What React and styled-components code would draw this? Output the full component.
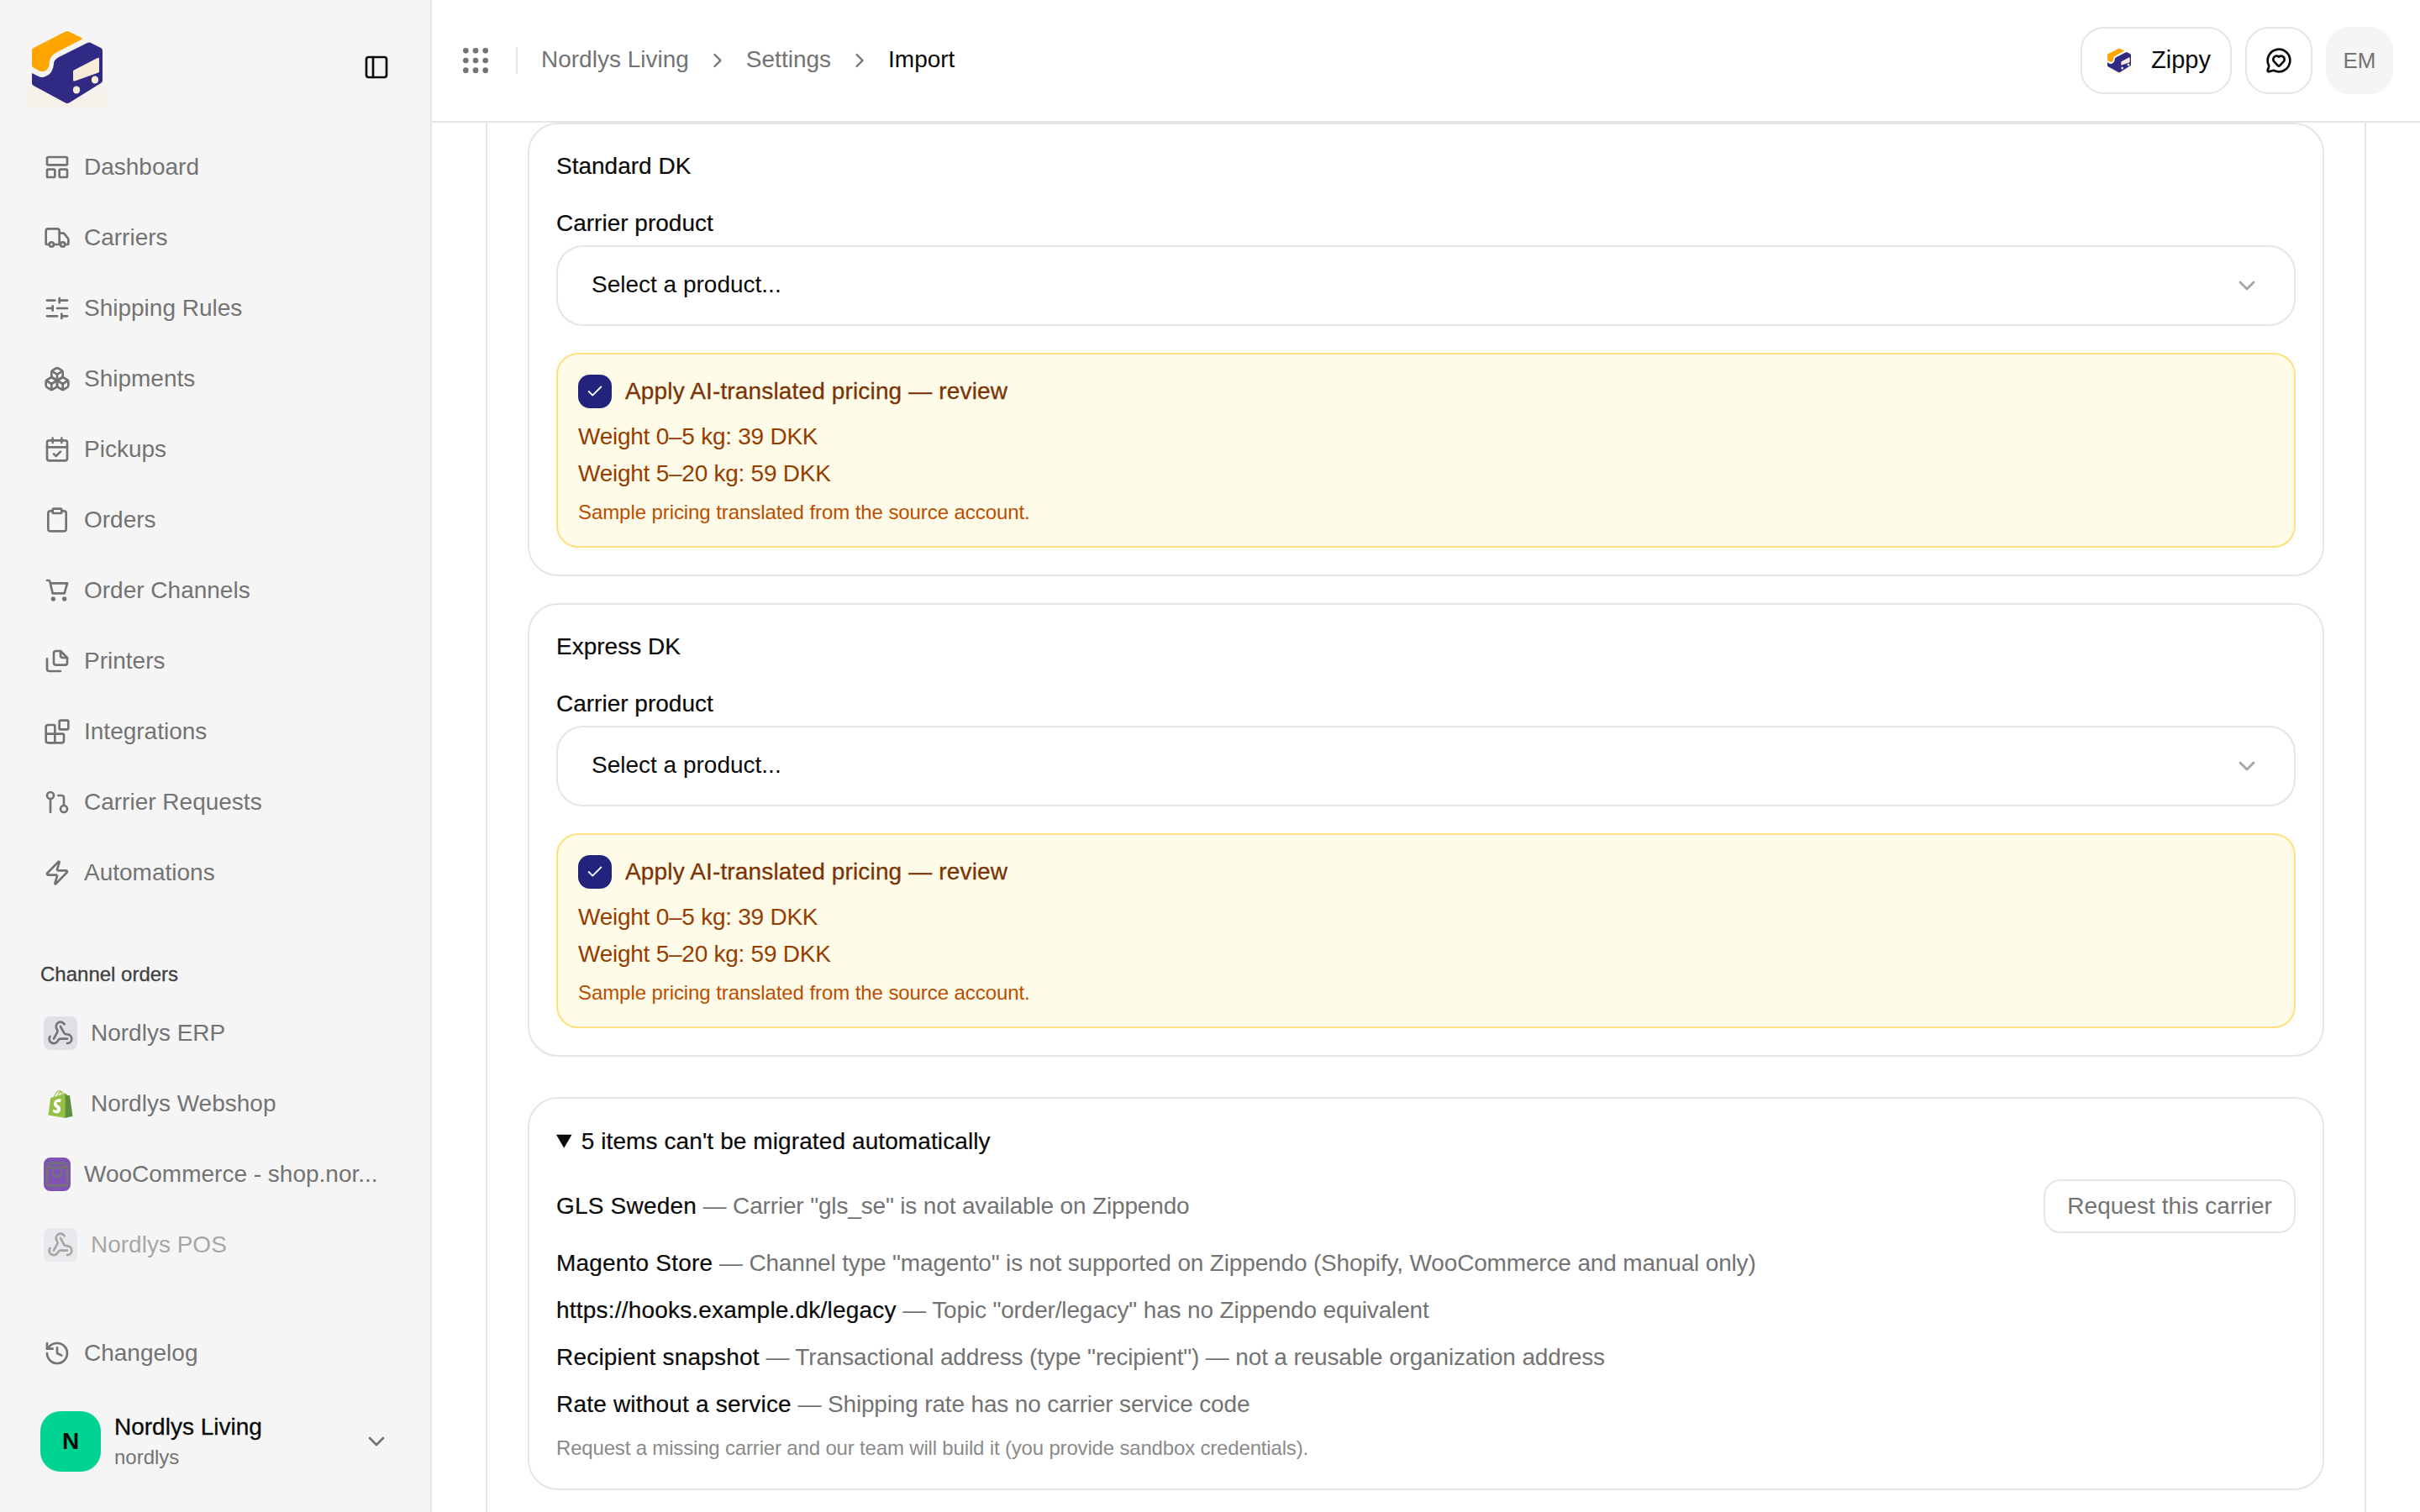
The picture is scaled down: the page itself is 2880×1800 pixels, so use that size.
import React from "react";
import styled, { createGlobalStyle } from "styled-components";
import {
  Blocks,
  Boxes,
  CalendarCheck,
  Check,
  ChevronDown,
  ChevronRight,
  Clipboard,
  GitPullRequest,
  Grip,
  History,
  LayoutPanelTop,
  MessageCircleHeart,
  PanelLeft,
  ShoppingBag,
  SlidersHorizontal,
  Truck,
  Webhook,
  Zap,
} from "lucide-react";

const GlobalStyle = createGlobalStyle`
  html, body {
    margin: 0;
    padding: 0;
    background: #fff;
  }
  body {
    font-family: "Liberation Sans", Arial, sans-serif;
    color: #0a0a0a;
    overflow: hidden;
  }
  * {
    box-sizing: border-box;
  }
`;

const Logo = ({ size }) => (
  <svg width={size} height={size} viewBox="32 32 96 96" fill="none">
    <defs>
      <linearGradient id="logoGlow" x1="0" y1="0" x2="0" y2="1">
        <stop offset="0.5" stopColor="#ffa500" stopOpacity="0" />
        <stop offset="1" stopColor="#ffa500" stopOpacity="0.06" />
      </linearGradient>
    </defs>
    <rect x="32" y="32" width="96" height="96" fill="url(#logoGlow)" />
    <path
      d="M38 60 Q38 58 40 57 L77 38 Q80 36.500 83 38 L97 45 Q99 46 97 47 L68 62 Q60 66 59 73 Q59 83 52 85 Q48 85.500 46 84 L39 80 Q38 79 38 77 Z"
      fill="#ffa500"
    />
    <path
      d="M104 51 Q106 50 108 51 L120 57 Q122 58 122 60 L122 96 Q122 98 120 99 L83 122 Q80 124 77 122 L40 102 Q38 101 38 99 L38 87 L46 91 Q50 93 54 91 Q63 88 64 76 Q64 71 70 68 Z"
      fill="#312a85"
    />
    <path
      d="M87 85 Q87 84 88 83.500 L116 69 Q118 68 118 70 L118 85 Q118 86 117 86.500 L89 96.500 Q87 97 87 95 Z"
      fill="#f8ecd9"
    />
    <ellipse cx="91" cy="107" rx="4.200" ry="4.600" fill="#f8ecd9" />
    <ellipse cx="113" cy="95" rx="4.200" ry="4.600" fill="#f8ecd9" />
  </svg>
);

const ShopifyLogo = () => (
  <svg width="30" height="33" viewBox="0 0 109.500 124.500">
    <path
      d="M95.900 23.900c-.1-.6-.6-1-1.100-1-.5 0-9.300-.2-9.300-.2s-7.400-7.200-8.100-7.900c-.7-.7-2.200-.5-2.700-.3 0 0-1.400.4-3.700 1.100-.4-1.300-1-2.800-1.800-4.400-2.600-5-6.500-7.700-11.100-7.700-.3 0-.6 0-1 .1-.1-.2-.3-.3-.4-.5C54.700.9 52.100-.1 49 0c-6 .2-12 4.500-16.800 12.200-3.400 5.400-6 12.200-6.700 17.500-6.900 2.100-11.700 3.600-11.800 3.700-3.500 1.100-3.600 1.200-4 4.500-.3 2.500-9.500 73-9.500 73l76.400 13.200 33.100-8.200c-.1-.1-13.700-91.400-13.800-92zm-28.700-7.100c-1.800.5-3.800 1.200-5.900 1.800 0-3-.4-7.300-1.800-10.900 4.600.9 6.800 6 7.700 9.100zm-10 3.100c-4 1.200-8.400 2.600-12.800 3.900 1.200-4.700 3.600-9.400 6.400-12.500 1.100-1.100 2.600-2.400 4.300-3.200 1.800 3.500 2.200 8.400 2.100 11.800zM49.100 4c1.400 0 2.600.3 3.600.9-1.600.8-3.200 2.100-4.700 3.600-3.800 4.100-6.700 10.500-7.900 16.600-3.600 1.100-7.200 2.200-10.500 3.200C31.700 18.800 39.800 4.300 49.100 4z"
      fill="#95bf47"
    />
    <path
      d="M94.800 22.900c-.5 0-9.300-.2-9.300-.2s-7.400-7.200-8.100-7.900c-.3-.3-.6-.4-1-.5V124l33.100-8.200S96 24.500 95.900 23.900c-.1-.6-.6-1-1.100-1z"
      fill="#5e8e3e"
    />
    <path
      d="M58 39.900l-3.800 14.400s-4.300-2-9.400-1.600c-7.500.5-7.500 5.200-7.500 6.400.4 6.400 17.300 7.800 18.300 22.900.7 11.900-6.300 20-16.400 20.600-12.200.8-18.900-6.400-18.900-6.400l2.600-11s6.700 5.100 12.100 4.700c3.500-.2 4.800-3.100 4.700-5.100-.5-8.400-14.300-7.900-15.200-21.700-.7-11.600 6.900-23.400 23.700-24.400 6.500-.5 9.800 1.200 9.800 1.200z"
      fill="#fff"
    />
  </svg>
);

// the nav's cart and printer glyphs are squarer than the lucide ones
const CartIcon = ({ size, color }) => (
  <svg width={size} height={size} viewBox="0 0 24 24" fill="none" stroke={color} strokeWidth="2" strokeLinecap="round" strokeLinejoin="round">
    <path d="M3 3h1.500a1 1 0 0 1 1 .8L8 14.500h10.500L21 5.500H5.800" />
    <circle cx="8.500" cy="19.500" r="1" fill={color} />
    <circle cx="18.500" cy="19.500" r="1" fill={color} />
  </svg>
);

const SheetsIcon = ({ size, color }) => (
  <svg width={size} height={size} viewBox="0 0 24 24" fill="none" stroke={color} strokeWidth="2" strokeLinecap="round" strokeLinejoin="round">
    <path d="M15 3h-4a2 2 0 0 0-2 2v8.500a2 2 0 0 0 2 2h8a2 2 0 0 0 2-2V9z" />
    <path d="M15 3v4a2 2 0 0 0 2 2h4" />
    <path d="M3 10v9a2 2 0 0 0 2 2h10" />
  </svg>
);

const navItems = [
  { label: "Dashboard", icon: LayoutPanelTop },
  { label: "Carriers", icon: Truck },
  { label: "Shipping Rules", icon: SlidersHorizontal },
  { label: "Shipments", icon: Boxes },
  { label: "Pickups", icon: CalendarCheck },
  { label: "Orders", icon: Clipboard },
  { label: "Order Channels", icon: CartIcon },
  { label: "Printers", icon: SheetsIcon },
  { label: "Integrations", icon: Blocks },
  { label: "Carrier Requests", icon: GitPullRequest },
  { label: "Automations", icon: Zap },
];

const pricedServices = ["Standard DK", "Express DK"];

const manualItems = [
  {
    name: "Magento Store",
    reason:
      'Channel type "magento" is not supported on Zippendo (Shopify, WooCommerce and manual only)',
  },
  {
    name: "https://hooks.example.dk/legacy",
    reason: 'Topic "order/legacy" has no Zippendo equivalent',
  },
  {
    name: "Recipient snapshot",
    reason: 'Transactional address (type "recipient") — not a reusable organization address',
  },
  {
    name: "Rate without a service",
    reason: "Shipping rate has no carrier service code",
  },
];

const ServiceCard = ({ title }) => (
  <Card>
    <CardTitle>{title}</CardTitle>
    <FieldLabel>Carrier product</FieldLabel>
    <Select>
      <SelectValue>Select a product...</SelectValue>
      <ChevronDown size={32} color="#a3a3a3" />
    </Select>
    <PricingBox>
      <PricingHead>
        <CheckMark>
          <Check size={22} color="#fff" />
        </CheckMark>
        Apply AI-translated pricing — review
      </PricingHead>
      <PricingLines>
        <PricingLine>Weight 0–5 kg: 39 DKK</PricingLine>
        <PricingLine>Weight 5–20 kg: 59 DKK</PricingLine>
      </PricingLines>
      <PricingNote>Sample pricing translated from the source account.</PricingNote>
    </PricingBox>
  </Card>
);

const ManualItem = ({ name, reason }) => (
  <span>
    <ItemName>{name}</ItemName> — {reason}
  </span>
);

export default function App() {
  return (
    <Shell>
      <GlobalStyle />
      <Sidebar>
        <SidebarHead>
          <Logo size={96} />
          <PanelLeft size={32} color="#0a0a0a" />
        </SidebarHead>
        <Nav>
          {navItems.map(({ label, icon: Icon }) => (
            <NavRow key={label}>
              <Icon size={32} color="#737373" />
              {label}
            </NavRow>
          ))}
        </Nav>
        <GroupLabel>Channel orders</GroupLabel>
        <Nav>
          <NavRow>
            <IconTile>
              <Webhook size={32} color="#737373" />
            </IconTile>
            Nordlys ERP
          </NavRow>
          <NavRow>
            <IconTile $bare>
              <ShopifyLogo />
            </IconTile>
            Nordlys Webshop
          </NavRow>
          <NavRow>
            <WooTile>
              <ShoppingBag size={32} color="#737373" />
            </WooTile>
            WooCommerce - shop.nor...
          </NavRow>
          <NavRow $faded>
            <IconTile>
              <Webhook size={32} color="#737373" />
            </IconTile>
            Nordlys POS
          </NavRow>
        </Nav>
        <SidebarFoot>
          <NavRow>
            <History size={32} color="#737373" />
            Changelog
          </NavRow>
          <OrgRow>
            <OrgAvatar>N</OrgAvatar>
            <OrgText>
              <OrgName>Nordlys Living</OrgName>
              <OrgSlug>nordlys</OrgSlug>
            </OrgText>
            <ChevronDown size={32} color="#737373" />
          </OrgRow>
        </SidebarFoot>
      </Sidebar>
      <Main>
        <TopBar>
          <Grip size={40} color="#737373" />
          <Divider />
          <Crumbs>
            <Crumb>Nordlys Living</Crumb>
            <ChevronRight size={28} color="#737373" />
            <Crumb>Settings</Crumb>
            <ChevronRight size={28} color="#737373" />
            <Crumb $current>Import</Crumb>
          </Crumbs>
          <TopActions>
            <ZippyButton>
              <Logo size={32} />
              <ZippyLabel>Zippy</ZippyLabel>
            </ZippyButton>
            <SquareButton>
              <MessageCircleHeart size={32} color="#0a0a0a" />
            </SquareButton>
            <UserBadge>EM</UserBadge>
          </TopActions>
        </TopBar>
        <Scroller>
          <Panel>
            <ServiceList>
              {pricedServices.map((title) => (
                <ServiceCard key={title} title={title} />
              ))}
            </ServiceList>
            <Card as="details" open>
              <Summary>5 items can't be migrated automatically</Summary>
              <ManualList>
                <RequestRow>
                  <ManualItem name="GLS Sweden" reason={'Carrier "gls_se" is not available on Zippendo'} />
                  <RequestButton>Request this carrier</RequestButton>
                </RequestRow>
                {manualItems.map((item) => (
                  <ManualRow key={item.name}>
                    <ManualItem {...item} />
                  </ManualRow>
                ))}
                <Footnote>
                  Request a missing carrier and our team will build it (you provide sandbox credentials).
                </Footnote>
              </ManualList>
            </Card>
          </Panel>
        </Scroller>
      </Main>
    </Shell>
  );
}

const Shell = styled.div`
  display: flex;
  width: 100%;
  height: 100vh;
  overflow: hidden;
`;

const Sidebar = styled.aside`
  flex: 0 0 514px;
  display: flex;
  flex-direction: column;
  background: #f5f5f5;
  border-right: 2px solid #e5e5e5;
`;

const SidebarHead = styled.div`
  display: flex;
  align-items: center;
  justify-content: space-between;
  height: 157px;
  padding: 32px 48px 29px 32px;
`;

const Nav = styled.nav`
  display: flex;
  flex-direction: column;
`;

const NavRow = styled.div`
  display: flex;
  align-items: center;
  gap: 16px;
  height: 84px;
  padding-left: 52px;
  font-size: 28px;
  white-space: nowrap;
  color: #737373;
  opacity: ${(p) => (p.$faded ? 0.6 : 1)};
`;

const GroupLabel = styled.div`
  margin: 62px 0 11px;
  padding-left: 48px;
  height: 34px;
  line-height: 34px;
  font-size: 24px;
  color: #404040;
  -webkit-text-stroke: 0.3px #404040;
`;

const IconTile = styled.span`
  display: flex;
  align-items: center;
  justify-content: center;
  width: 40px;
  height: 40px;
  border-radius: 8px;
  background: ${(p) => (p.$bare ? "transparent" : "#e0e0e8")};
`;

const WooTile = styled.span`
  display: flex;
  align-items: center;
  justify-content: center;
  width: 32px;
  height: 40px;
  border-radius: 8px;
  background: #7f54b3;
`;

const SidebarFoot = styled.div`
  margin-top: auto;
  padding-bottom: 48px;
`;

const OrgRow = styled.div`
  display: flex;
  align-items: center;
  margin-top: 27px;
  padding: 0 48px;
`;

const OrgAvatar = styled.div`
  display: flex;
  align-items: center;
  justify-content: center;
  width: 72px;
  height: 72px;
  border-radius: 24px;
  background: #00d492;
  font-size: 28px;
  font-weight: 700;
`;

const OrgText = styled.div`
  flex: 1;
  margin-left: 16px;
`;

const OrgName = styled.div`
  font-size: 28px;
  line-height: 38px;
  -webkit-text-stroke: 0.3px #0a0a0a;
`;

const OrgSlug = styled.div`
  font-size: 24px;
  line-height: 34px;
  color: #737373;
`;

const Main = styled.main`
  flex: 1;
  display: flex;
  flex-direction: column;
  min-width: 0;
`;

const TopBar = styled.header`
  flex: 0 0 146px;
  display: flex;
  align-items: center;
  padding: 0 32px;
  border-bottom: 2px solid #e5e5e5;
`;

const Divider = styled.span`
  width: 2px;
  height: 32px;
  margin: 0 28px;
  background: #e5e5e5;
`;

const Crumbs = styled.div`
  display: flex;
  align-items: center;
  gap: 20px;
`;

const Crumb = styled.span`
  padding-bottom: 2px;
  font-size: 28px;
  color: ${(p) => (p.$current ? "#0a0a0a" : "#737373")};
`;

const TopActions = styled.div`
  display: flex;
  gap: 16px;
  margin-left: auto;
`;

const ZippyButton = styled.div`
  display: flex;
  align-items: center;
  gap: 22px;
  width: 180px;
  height: 80px;
  padding-left: 28px;
  border: 2px solid #e5e5e5;
  border-radius: 28px;
  font-size: 29px;
`;

const ZippyLabel = styled.span`
  padding-bottom: 2px;
`;

const SquareButton = styled.div`
  display: flex;
  align-items: center;
  justify-content: center;
  width: 80px;
  height: 80px;
  border: 2px solid #e5e5e5;
  border-radius: 28px;
`;

const UserBadge = styled.div`
  display: flex;
  align-items: center;
  justify-content: center;
  width: 80px;
  height: 80px;
  border-radius: 28px;
  background: #f5f5f5;
  color: #737373;
  font-size: 26px;
`;

const Scroller = styled.div`
  flex: 1;
  overflow: hidden;
`;

const Panel = styled.div`
  width: 2238px;
  min-height: 100%;
  margin: 0 auto;
  padding: 0 48px;
  border-left: 2px solid #e5e5e5;
  border-right: 2px solid #e5e5e5;
`;

const ServiceList = styled.div`
  display: flex;
  flex-direction: column;
  gap: 32px;
  margin-bottom: 48px;
`;

const Card = styled.section`
  padding: 32px;
  border: 2px solid #e5e5e5;
  border-radius: 36px;
`;

const CardTitle = styled.div`
  font-size: 28px;
  line-height: 36px;
  -webkit-text-stroke: 0.2px #0a0a0a;
`;

const FieldLabel = styled.div`
  margin-top: 32px;
  font-size: 28px;
  line-height: 36px;
  -webkit-text-stroke: 0.2px #0a0a0a;
`;

const Select = styled.div`
  display: flex;
  align-items: center;
  justify-content: space-between;
  height: 96px;
  margin-top: 8px;
  padding: 0 40px;
  border: 2px solid #e5e5e5;
  border-radius: 32px;
  font-size: 28px;
`;

const SelectValue = styled.span`
  padding-bottom: 2px;
`;

const PricingBox = styled.div`
  margin-top: 32px;
  padding: 24px;
  border: 2px solid #ffdf7e;
  border-radius: 26px;
  background: #fefce8;
`;

const PricingHead = styled.div`
  display: flex;
  align-items: center;
  gap: 16px;
  height: 40px;
  font-size: 28px;
  letter-spacing: 0.15px;
  color: #7b3306;
  -webkit-text-stroke: 0.3px #7b3306;
`;

const CheckMark = styled.span`
  display: flex;
  align-items: center;
  justify-content: center;
  width: 40px;
  height: 40px;
  border-radius: 14px;
  background: #21237c;
`;

const PricingLines = styled.div`
  margin-top: 12px;
`;

const PricingLine = styled.div`
  font-size: 28px;
  line-height: 44px;
  letter-spacing: -0.25px;
  color: #973c00;
`;

const PricingNote = styled.div`
  margin-top: 8px;
  font-size: 24px;
  line-height: 32px;
  letter-spacing: -0.08px;
  color: #bb4d00;
`;

const Summary = styled.summary`
  font-size: 28px;
  line-height: 38px;
  letter-spacing: 0.1px;
  -webkit-text-stroke: 0.2px #0a0a0a;
`;

const ManualList = styled.div`
  display: flex;
  flex-direction: column;
  gap: 16px;
  margin-top: 26px;
  font-size: 28px;
  line-height: 40px;
  letter-spacing: -0.16px;
  color: #737373;
`;

const RequestRow = styled.div`
  display: flex;
  align-items: center;
  justify-content: space-between;
`;

const ManualRow = styled.div``;

const ItemName = styled.span`
  letter-spacing: 0.2px;
  color: #0a0a0a;
  -webkit-text-stroke: 0.2px #0a0a0a;
`;

const RequestButton = styled.div`
  display: flex;
  align-items: center;
  height: 64px;
  padding: 0 26px;
  border: 2px solid #e5e5e5;
  border-radius: 20px;
  font-size: 28px;
  letter-spacing: 0.05px;
  color: #737373;
`;

const Footnote = styled.div`
  font-size: 24px;
  line-height: 32px;
  letter-spacing: -0.17px;
  color: #8a8a8a;
`;
